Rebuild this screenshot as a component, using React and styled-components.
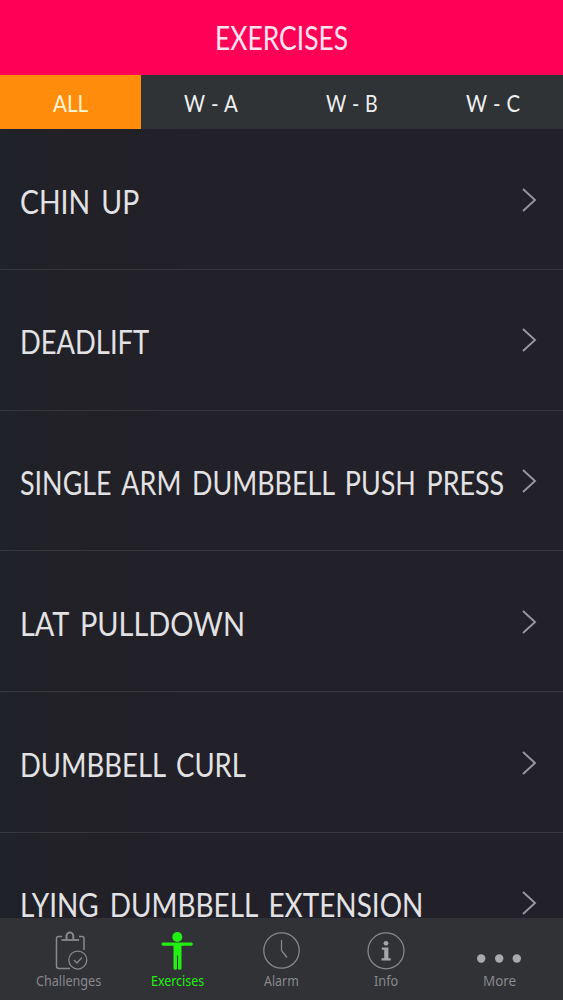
import React, { useLayoutEffect, useRef, useState } from "react";
import styled, { createGlobalStyle } from "styled-components";

const Global = createGlobalStyle`
  * { box-sizing: border-box; }
  body { margin: 0; background: #212128; }
`;

const Screen = styled.div`
  width: 563px;
  height: 1000px;
  display: flex;
  flex-direction: column;
  overflow: hidden;
  background: linear-gradient(90deg, #1f2229 0, #212127 50px, #222028 200px, #222028 100%);
  font-family: Lato, "Liberation Sans", sans-serif;
  color: #e2e2e4;
`;

const Header = styled.header`
  flex: 0 0 74.5px;
  display: flex;
  justify-content: center;
  padding-top: 17px;
  background: #ff0056;
  color: #ffe3ef;
`;

const Tabs = styled.nav`
  flex: 0 0 54.5px;
  display: grid;
  grid-template-columns: repeat(4, 1fr);
  background: #303335;
`;

const Tab = styled.div`
  display: flex;
  justify-content: center;
  padding-top: 13px;
  background: ${(p) => (p.$active ? "#ff8c0a" : "transparent")};
  color: ${(p) => (p.$active ? "#fff3d4" : "#edf0f0")};
`;

const List = styled.main`
  flex: 1;
  min-height: 0;
  overflow: hidden;
`;

const Row = styled.div`
  height: 140.75px;
  display: flex;
  justify-content: space-between;
  align-items: flex-start;
  padding: 52.6px 26px 0 20px;
  border-bottom: 1px solid #38383c;
`;

const Chevron = styled.svg`
  width: 16px;
  height: 26px;
  margin-top: 5px;
  fill: none;
  stroke: #98989b;
  stroke-width: 1.9;
`;

const Bar = styled.footer`
  flex: 0 0 82px;
  display: grid;
  grid-template-columns: 137px 81px 126px 84px 142px;
  background: #303236;
  font-family: "Noto Sans", "Open Sans", sans-serif;
`;

const BarItem = styled.div`
  display: flex;
  flex-direction: column;
  align-items: center;
  padding-top: 8px;
  color: ${(p) => (p.$active ? "#22ef12" : "#88898d")};
`;

const BarIcon = styled.svg`
  width: 44px;
  height: 46px;
  fill: none;
  stroke: currentColor;
  stroke-width: 1.25;
`;

const TextBox = styled.div`
  flex: none;
  width: ${(p) => p.$w}px;
  height: ${(p) => p.$line}px;
  font-size: ${(p) => p.$size}px;
  line-height: ${(p) => p.$line}px;
  word-spacing: ${(p) => p.$gap}px;
`;

const TextRun = styled.span`
  display: inline-block;
  white-space: nowrap;
  transform-origin: 0 50%;
`;

function FitText({ width, size, line, gap = 0, children }) {
  const ref = useRef(null);
  const [scale, setScale] = useState(1);
  useLayoutEffect(() => {
    const fit = () => setScale(width / ref.current.offsetWidth);
    fit();
    document.fonts.ready.then(() => ref.current && fit());
  }, [width, children]);
  return (
    <TextBox $w={width} $size={size} $line={line} $gap={gap}>
      <TextRun ref={ref} style={{ transform: `scaleX(${scale})` }}>{children}</TextRun>
    </TextBox>
  );
}

const tabs = [["ALL", 35], ["W - A", 54], ["W - B", 52], ["W - C", 54]];
const exercises = [
  ["CHIN UP", 119.5],
  ["DEADLIFT", 129.5],
  ["SINGLE ARM DUMBBELL PUSH PRESS", 484],
  ["LAT PULLDOWN", 225],
  ["DUMBBELL CURL", 225.5],
  ["LYING DUMBBELL EXTENSION", 403],
];

const ChallengesIcon = () => (
  <BarIcon viewBox="0 0 44 46">
    <path d="M15 10.500h-3.500q-2 0-2 2v27.500q0 2.500 2.500 2.500H23M32 10.500h3q2 0 2 2V24" strokeWidth="1.500" />
    <path d="M14.500 14h17.500" strokeWidth="1.800" />
    <path d="M19.500 13.500v-3.500a3.400 3.400 0 0 1 6.800 0v3.500" strokeWidth="2" />
    <circle cx="30.800" cy="34" r="9" />
    <path d="m27 34 3 3 5-5.500" />
  </BarIcon>
);

const PersonIcon = () => (
  <BarIcon viewBox="0 0 44 46">
    <g fill="currentColor" stroke="none">
      <circle cx="21.300" cy="11" r="5" />
      <path d="M7 16.500h28.500q1.300 0 1.300 1.600t-1.300 1.600h-10v22.600q0 1.500-1.700 1.500t-1.800-1.500V29.500h-1v12.800q0 1.500-1.800 1.500t-1.700-1.500V19.700H7q-1.500 0-1.500-1.600t1.500-1.600Z" />
    </g>
  </BarIcon>
);

const AlarmIcon = () => (
  <BarIcon viewBox="0 0 44 46">
    <circle cx="22.500" cy="24.500" r="17.700" />
    <path d="M22.500 14v10.500l5.500 7" />
  </BarIcon>
);

const InfoIcon = () => (
  <BarIcon viewBox="0 0 44 46">
    <circle cx="22" cy="24.800" r="18" />
    <g fill="#a4a5a8" stroke="none">
      <circle cx="22" cy="17.300" r="2.400" />
      <path d="M17.800 21.500h6.600v10.700h2.300v2.300h-9.200v-2.300h2.700v-8.400h-2.400Z" />
    </g>
  </BarIcon>
);

const MoreIcon = () => (
  <BarIcon viewBox="0 0 44 46">
    <g fill="#a9aaac" stroke="none">
      <circle cx="4.200" cy="32.500" r="4.200" />
      <circle cx="22.200" cy="32.500" r="4.200" />
      <circle cx="39.800" cy="32.500" r="4.200" />
    </g>
  </BarIcon>
);

const barItems = [
  ["Challenges", 65, ChallengesIcon],
  ["Exercises", 53, PersonIcon],
  ["Alarm", 35, AlarmIcon],
  ["Info", 24, InfoIcon],
  ["More", 33, MoreIcon],
];

export default function App() {
  return (
    <>
      <Global />
      <Screen>
        <Header><FitText width={133} size={33} line={40}>EXERCISES</FitText></Header>
        <Tabs>
          {tabs.map(([name, w], i) => (
            <Tab key={name} $active={i === 0}><FitText width={w} size={23} line={30} gap={1}>{name}</FitText></Tab>
          ))}
        </Tabs>
        <List>
          {exercises.map(([name, w]) => (
            <Row key={name}>
              <FitText width={w} size={32.500} line={40} gap={4.500}>{name}</FitText>
              <Chevron viewBox="0 0 16 26"><path d="m2 2 12 11L2 24" /></Chevron>
            </Row>
          ))}
        </List>
        <Bar>
          {barItems.map(([name, w, Icon], i) => (
            <BarItem key={name} $active={i === 1}>
              <Icon />
              <FitText width={w} size={13.800} line={18}>{name}</FitText>
            </BarItem>
          ))}
        </Bar>
      </Screen>
    </>
  );
}
